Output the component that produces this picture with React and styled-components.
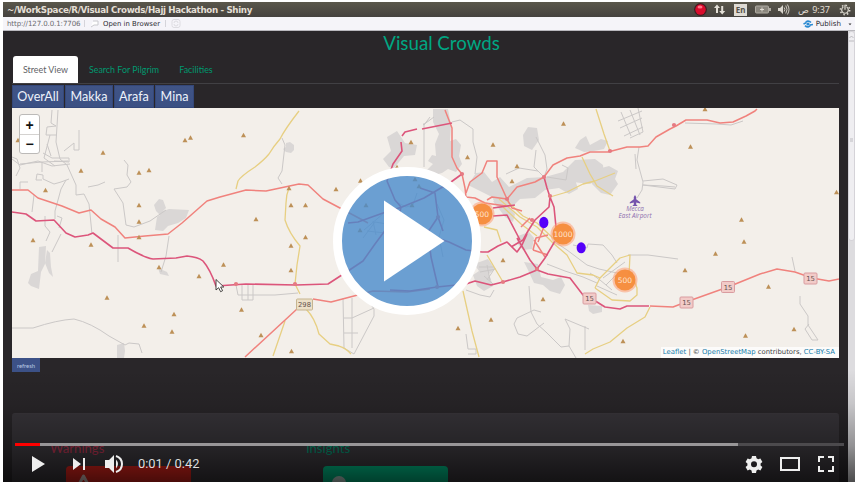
import React from 'react';
import styled, { createGlobalStyle } from 'styled-components';

const GlobalStyle = createGlobalStyle`
  * { box-sizing: border-box; }
  html, body { margin: 0; background: #fff; overflow: hidden; }
  button { border: 0; margin: 0; padding: 0; background: none; font: inherit; color: inherit; }
`;

const Player = styled.main`
  position: relative;
  width: 852px;
  height: 480px;
  margin: 2px 0 0 3px;
  display: flex;
  flex-direction: column;
  background: #292629;
  overflow: hidden;
`;

const TitleBar = styled.header`
  height: 15px;
  flex: none;
  display: flex;
  align-items: center;
  justify-content: space-between;
  padding: 0 4px;
  background: linear-gradient(#5a574b, #45423f);
  color: #e4dfd5;
  font: bold 8.72px 'DejaVu Sans', sans-serif;
  white-space: nowrap;
`;

const Title = styled.span`
  letter-spacing: -.35px;
`;

const Tray = styled.div`
  display: flex;
  align-items: center;
  height: 15px;
  svg { display: block; }
`;

const Clock = styled.span`
  font: 9px 'Noto Sans', 'DejaVu Sans', sans-serif;
  width: 32px;
  margin: 0 9px 0 4px;
  direction: ltr;
  display: flex;
  justify-content: space-between;
`;

const Lang = styled.span`
  width: 13px;
  height: 12px;
  margin: 0 8px 0 6px;
  background: #dfdbd4;
  color: #55514a;
  font: bold 8px/12px 'Noto Sans', sans-serif;
  text-align: center;
`;

const Toolbar = styled.div`
  height: 14px;
  flex: none;
  display: flex;
  align-items: center;
  padding: 0 0 0 4px;
  background: #f5f4f9;
  border-bottom: 1px solid #b9b8bd;
  color: #2d2d33;
  font: 6.9px 'DejaVu Sans', sans-serif;
  white-space: nowrap;
`;

const Address = styled.span`
  width: 74px;
  color: #6b6b70;
  font-size: 7.05px;
  letter-spacing: -.1px;
`;

const ToolDivider = styled.i`
  width: 1px;
  height: 7px;
  margin-left: ${p => p.$gap || 0}px;
  background: #d5d4da;
`;

const ToolLabel = styled.span`
  margin-left: ${p => p.$gap}px;
`;

const Publish = styled.div`
  margin-left: auto;
  display: flex;
  align-items: center;
  gap: 3px;
  font-size: 7.1px;
`;

const Viewport = styled.div`
  flex: 1;
  display: flex;
  min-height: 0;
`;

const Page = styled.section`
  flex: 1;
  padding: 0 9px;
  font-family: Lato, sans-serif;
`;

const Heading = styled.h1`
  height: 25px;
  margin: 0;
  padding-left: 32px;
  color: #00a783;
  font: 400 18.7px/25px Lato, sans-serif;
  text-align: center;
`;

const Tabs = styled.nav`
  display: flex;
  height: 28px;
  width: 827px;
  border-bottom: 1px solid #414044;
`;

const Tab = styled.button`
  width: ${p => p.$w}px;
  height: 27px;
  padding-bottom: 1px;
  margin-left: ${p => p.$gap || 0}px;
  border-radius: 3px 3px 0 0;
  background: ${p => (p.$active ? '#fff' : 'transparent')};
  color: ${p => (p.$active ? '#606266' : '#00996f')};
  font-size: 8.9px;
  white-space: nowrap;
`;

const Regions = styled.div`
  display: flex;
  gap: 1px;
  height: 24px;
`;

const RegionButton = styled.button`
  width: ${p => p.$w}px;
  height: 23px;
  margin-top: 1px;
  background: linear-gradient(#405486, #3b5084);
  border: 1px solid #344779;
  color: #edf2fb;
  font: 12.6px/19px Lato, sans-serif;
`;

const MapPanel = styled.div`
  position: relative;
  width: 827px;
  height: 250px;
  background: #f3efea;
  overflow: hidden;
  > svg { display: block; }
`;

const ZoomControl = styled.div`
  position: absolute;
  left: 7px;
  top: 6px;
  width: 21px;
  height: 40px;
  display: flex;
  flex-direction: column;
  border: 1px solid #bcbab8;
  border-radius: 3px;
  background: #fff;
`;

const ZoomButton = styled.button`
  height: 19px;
  color: #111;
  font: bold 14px/18px 'Liberation Sans', sans-serif;
  & + & { border-top: 1px solid #d4d2d0; }
`;

const Attribution = styled.div`
  position: absolute;
  right: 0;
  bottom: 0;
  width: 178px;
  height: 11px;
  background: rgba(255, 255, 255, .75);
  color: #444;
  font: 6.87px/11px 'DejaVu Sans', sans-serif;
  text-align: right;
  padding-right: 4px;
  white-space: nowrap;
  b { font-weight: 400; color: #147cab; }
`;

const Refresh = styled.button`
  display: block;
  width: 28px;
  height: 14px;
  background: #3c5187;
  color: #b9c8e4;
  font-size: 5.9px;
`;

const Well = styled.section`
  width: 827px;
  height: 90px;
  margin-top: 41px;
  border-radius: 3px 3px 0 0;
  border-top: 1px solid #3b383d;
  background: #39363b;
  display: flex;
  padding: 26px 0 0 38px;
`;

const Group = styled.div`
  width: 256px;
`;

const GroupTitle = styled.h2`
  margin: 0;
  height: 26px;
  color: ${p => p.$color};
  font: 400 13.1px/17px Lato, sans-serif;
`;

const Card = styled.div`
  width: 125px;
  height: 30px;
  margin-left: ${p => p.$shift}px;
  border-radius: 4px;
  background: ${p => p.$color};
  padding-left: 9px;
  svg { display: block; }
`;

const Scroller = styled.aside`
  width: 7px;
  background: #dddcdf;
`;

const Thumb = styled.div`
  height: 210px;
  border: 1px solid #d5d3d8;
  border-radius: 3px;
  background: #efeef1;
  svg { display: block; }
`;

const Shade = styled.div`
  position: absolute;
  inset: auto 0 0;
  height: 112px;
  background: linear-gradient(transparent, rgba(0, 0, 0, .1) 30%, rgba(0, 0, 0, .34) 68%, rgba(0, 0, 0, .5) 84%, rgba(0, 0, 0, .66));
`;

const PlayOverlay = styled.button`
  position: absolute;
  left: 330px;
  top: 165px;
  width: 148px;
  height: 148px;
  border-radius: 50%;
  border: 9px solid #fff;
  background: rgba(73, 139, 204, .8);
  svg { display: block; }
`;

const Controls = styled.footer`
  position: absolute;
  inset: auto 11px 0 12px;
  height: 39px;
`;

const Track = styled.div`
  height: 3px;
  display: flex;
  background: #4c4a4d;
`;

const Segment = styled.i`
  width: ${p => p.$w}px;
  background: ${p => p.$color};
`;

const ControlRow = styled.div`
  height: 36px;
  display: flex;
  align-items: center;
  color: #eee;
  svg { display: block; flex: none; }
`;

const Time = styled.span`
  margin-left: 11px;
  padding-bottom: 1px;
  font: 12.9px Roboto, sans-serif;
  color: #ddd;
  flex: 1;
`;

const peaks = [
  [18,140],[103,152.5],[81,170.5],[45.5,190],[139,172.5],[149,170],[185,140],[190.5,137.5],
  [139,205],[139,221.5],[139,237],[33,240],[243.5,135],[289,188],[291,205],[305.5,205],
  [256,219],[305.5,237],[336,189],[360.5,180.5],[411,142],[397,167],[415,179],[419,186],
  [366,205],[412,205],[360,230],[563.5,123.5],[493,144.5],[467.5,157],[517,166],[512,181],
  [705,109],[690.5,146.5],[836.5,192],[741.5,219.5],[91,244.5],[159,267],[199,276],
  [107,297.5],[174,314],[144,325.5],[172,331.5],[291,245.5],[223.5,264.5],[291,270],
  [241.5,309.5],[261,335],[291.5,351],[503,260],[543,299],[491,319.5],[458,328],[623,341],
  [744,241.5],[715.5,253.5],[685,270],[768.5,286.5],[794,329],[745.5,335.5],
];

const districts = [
  'M154 205l5-6 4 1 3 8-3 3 6-2 20 1-3 8-8 5-10 3-5 5-8-1 2-13 3-2-4-4z',
  'M286 143l4-1 4 3v5l-3 3-5-1-3-3 3-2z',
  'M39 247l7-1-1 18-4 8-2 17-8-3-3-3 3-9 7-3z',
  'M47 250l3 3 1 14 2 10-4-4-4-10z',
  'M117 345l7-2 1 8-1 7h-7z M158 268l9 4 2 4-9-2z',
  'M433 109h15l3 16-1 16 6-2 5 6-2 11 3 8-6 8-8-3-6 4-11 3-6-4 8-8-5-3 4-6 4 1-1-12 4-10-6-12z',
  'M387 137l10-6 8 12 12 2-2 10-11 1-10 12-5-1-6-8 8-8z',
  'M528 127l9 1 2 12-7 10-8-4-1-11z',
  'M580 140l6-4 4 9 11-6 7 2-4 8-10 2-10 1-9-4z',
  'M468 185l8-12 8-1 8 10 8-5 9 10 18-9 18-1 18-5 11 4 4 13-9 5-10-6-14 2-10 8-15 1-8 8-16-2-4-8z',
  'M563 172l12-12 20-1 8 6 1 12-14 7-17-2-7 5z',
  'M594 170l15-4 9 5-3 8 3 5-8 11-9-2-9-9z',
  'M474 264l14-5 7 10-6 5 4 12-9 5-7-5-4-11 6-4z',
  'M524 262l14 2 3 13 12 3 8-3 4 8-5 9-10-3-7-6-9-2-6-13z',
  'M588 305l14 1v6l-9 2-4-3z',
  'M518 236l11-4 5 6-2 11-9 1-6-7z',
  'M493 201l10 0 12 13-2 8-8-5z',
];

const tracks = [
  'M52 110l-1 13 5 3-9 1-1 8h11m-7 0l-6 23 11 8m3-56-2 32 4 17 7 6 9 20v10l8-1 5 10 3 30',
  'M43 153l9 5h17v4l-15-1m-3-5-4-12m17 7 10-8v7h5v-20M12 159l8 6 18-4 14 5 18-2',
  'M12 157l5 2 3 9-4 8m4-12 22-2 26-1M42 162v10m-22 17v-7h8m8-2h6m-6 0 1-6 6 1v4l11 5 7-2 8-3',
  'M66 180l-5 9-6 22v8M88 187l10-2 7-3M124 160l4 5-1 10 4 7-4 5-13 2 9 14 3 22 8 2 16-6 16-11',
  'M12 328h21q24-8 41-9 17 4 35 17l16 9 4-2 10 1 3 9M118 235v27M61 234l-9 18M45 216v10l5 6-4 9M169 236l-3 20-5 16M34 195l-2 17M57 216l5 2-3 10',
  'M236 285l2 10h37l23-2m-56-8v15h11v-15m-5 0v15M282 138l3 7-3 26-4 7 4 6',
  'M424 123v44m-1-42 11-8',
  'M343 298l1 50 10 6 20-38v-7l-13-19M352 298v50M344 318h8l22-10M344 333h14M430 117l-6 8',
  'M529 286l2 26 6 12 9 8 15 15 8-1 7 12M541 312l-7-2-17 8-3 6 4 10 9 2 17-13M589 329l-24-10 5 10-1 17m16-20v24M466 334l2 15h8v5h-8M466 290l14 5 10 2 4-7',
  'M621 112l10 24M630 110l10 25M638 108l5 24M618 121l24-10M620 128l22-10M624 136l19-9M630 138l13-6',
  'M639 147l-2 13 6 22-1 8-5 8m6-17 20-2 14 6-2 4-32-4m0 0 20 1 12 1M635 154l1 15M685 123l32 1 14 1 12-4M628 255h20l30 4m114-2 3 14m5 25v8l8 12v9l10 15h-6l-7-11 4-5',
  'M452 122l8-2 13 9v13l4 15-2 17M536 137l9 18 2 14-3 8M536 150l-2 17 10 10M506 174l13-6 19 3M562 165l6 3-2 12-19-3',
  'M555 242l12 8 20 15 12 4 18 4M573 245l14 3 1-4 15 1 9 10 5 8M547 264l18 7 18 6 14 6M590 273l10 7 12 10M597 286l20 9M603 278l22-16M606 285l10-10',
  'M487 265l3 15m5-12-8 12m-7-8 16-3m-12 7 9 8M479 267h15',
  'M364 230l20-17m-21 25 12-16 18 3m-26 6 18 2m-12-12 3 14m22-32 8 4 7-2 4-12m20 11 7 16-5 17 4 20',
];

const minorRoads = [
  'M299 111q-14 18-19 28-7 8-11 15-5 6-14 13-14 9-17 14l-2 8M289 188q-3 7-3 15l-1 17q4 13 15 26l-3 19-2 19 5 10M306 309q9 9 13 25l11 10 9 2q7 2 12 8M285 321l-12 35M463 291l9 40 7 26M596 109l8 25 6 17M582 157l8 17 7 12 16 10M550 197l17-5 16-8 12-3 20-8M585 354l8-5 17-7 17-14 18-11 5-10M487 255l16 27',
  'M499 199l21 18 17 10 16 16 14 12 10 18 16 2 7 3M507 201l16 15 14 7 18 17M503 207l18 17 16 12',
  'M595 288l5-10 20-20 10-3-1 20M595 288l17 12 18 1 7-6v-7l-4-11M484 227l13 3 4 12',
];

const primaryRoads = [
  'M12 190h16l10 8 24 8 17 7 12-3 10 9 14 8 10 11 20-2 23-2 14-11 25-22 13-4 26-7 20 1 33-7 9 1 15 14 32 17 13 7',
  'M245 357l52-48M313 299l18 3 42-11 34 1 23-3M445 110l7 18v29l5 11 5 6 3 14 1 9 9 1 10 5 21 3M466 193l4-11 12-9 5-12h10v16l10 22',
  'M507 199l10-12 18-5 9-5 9-12 14-7 13-2 10-4h18l19-5h13l8-1 8-9 14-8 6-3 10-6 21 0 13 3 13-1 13-6 9-5 2-2',
  'M487 200l5-3 15 2 5 9 10 3M533 250l3-12 12-3M533 250l15 5M534 240l11 17M530 218l-9 9M545 224l-7 18',
  'M650 306l23 1 13-5 42-15 32-13 17-5 18 3 17 6 17 3 10-2 8-4',
];

const trunkRoads = [
  'M12 212l14 2 10 7 18-1 12 13 9 4 13-2 5-2 8 6 12 9h15q17 10 25 11l23-1 11-2q11 1 16 5 7 8 13 25l30-2 50 1 32-1 20-13 15-10 12-17 20-27',
  'M402 136l3-4 12-3m5 0 30-6M401 142l1 9-9 13-6 17 8 19 6 7-5 24M348 223l10-1 25-9 19-6 22-9 27-16 11-8M420 188l15 5 3 24 5 14',
  'M438 217l-10 15 3 25 7 30M390 290l20 1 27-4 29-3 9-3 16 4 12-3 17-5 17-7 11 4 22 4 13 17 14 7 8 5 15 2 7-3h22',
  'M437 238l12 4 17 8 16 2 6 0 10-6 9-4 10 10 5-7 5-11M517 238l6 10 7 12 7 9 8-11 10-17M511 247l12-7 5-9 7-11 14-13 1-10-3-9-3-11M550 197l4 10 2 20M493 208l22-3M493 216l14-1 13 25',
];

const badges = [[304.5,304.5,'298'],[589.5,298.5,'15'],[686.5,302.5,'15'],[728,287,'15'],[810.5,278.5,'15']];
const clusters = [[482,214,'500'],[563,234,'1000'],[625,280,'500']];

const lineSets = [
  { paths: tracks, color: '#cbc8c7', width: 1 },
  { paths: minorRoads, color: '#e7cf82', width: 1.3 },
  { paths: primaryRoads, color: '#f0827d', width: 1.5 },
  { paths: trunkRoads, color: '#dc557b', width: 1.6 },
];

function StreetMap() {
  return (
    <svg width="827" height="250" viewBox="12 108 827 250">
      {districts.map(d => <path key={d} d={d} fill="#dad7d6" />)}
      {lineSets.map(s => (
        <g key={s.color} fill="none" stroke={s.color} strokeWidth={s.width} strokeLinejoin="round">
          {s.paths.map(d => <path key={d} d={d} />)}
        </g>
      ))}
      {peaks.map(([x, y]) => <path key={`${x}-${y}`} d={`M${x} ${y - 2.3}l2.5 4.5h-5z`} fill="#bd9057" />)}
      {[[507,199],[550,196],[544,177],[537,269],[503,282],[462,174],[438,217],[295,284],[236,284],[674,125],[532,220],[610,151],[437,287]].map(([x, y]) => (
        <circle key={`${x}-${y}`} cx={x} cy={y} r="2.1" fill="#e67a82" />
      ))}
      <path d="M635 195l1.2 2v2.2l4 3v1.2l-4-1v2.2l1.5 1.5h-5.4l1.5-1.5v-2.2l-4 1v-1.2l4-3V197z" fill="#7554ad" />
      <g fill="#8b6cae" fontFamily="Open Sans" fontSize="6.3" fontStyle="italic" textAnchor="middle">
        <text x="635" y="210.7">Mecca</text>
        <text x="635" y="218" textLength="33">East Airport</text>
      </g>
      {badges.map(([x, y, t]) => (
        <g key={x}>
          <rect x={x - (t === '298' ? 8 : 6.5)} y={y - 5.5} width={t === '298' ? 16 : 13} height="11" rx="1"
            fill={t === '298' ? '#ece0c8' : '#f2cbc8'} stroke={t === '298' ? '#c6b590' : '#d99ca0'} />
          <text x={x} y={y + 2.5} fontFamily="DejaVu Sans" fontSize="6.8" fill="#65534f" textAnchor="middle">{t}</text>
        </g>
      ))}
      {clusters.map(([x, y, t]) => (
        <g key={x}>
          <circle cx={x} cy={y} r="12.5" fill="#fd9c73" opacity=".55" />
          <circle cx={x} cy={y} r="10.5" fill="#f58a35" opacity=".9" />
          <text x={x} y={y + 2.7} fontFamily="DejaVu Sans" fontSize="7.5" fill="#ffe4cd" textAnchor="middle">{t}</text>
        </g>
      ))}
      <ellipse cx="543.8" cy="222.5" rx="4.6" ry="5.7" fill="#5500fa" />
      <ellipse cx="581.2" cy="247.8" rx="4.6" ry="5.5" fill="#5500fa" />
      <path d="M216 279.5v10.5l2.6-2.3 2 4 2-1-2-3.7h3.2z" fill="#fff" stroke="#33312f" strokeWidth=".9" />
    </svg>
  );
}

function TrayIcons() {
  return (
    <Tray>
      <svg width="13" height="13" viewBox="0 0 13 13">
        <circle cx="6.5" cy="6.5" r="6.4" fill="#3f1d22" /><circle cx="6.5" cy="6.5" r="5.2" fill="#d80b2c" /><ellipse cx="6" cy="4" rx="2.5" ry="1.5" fill="#ff7284" />
      </svg>
      <svg width="21" height="15" viewBox="0 0 21 15" fill="#e3dfd7">
        <path d="M7 6l3-3.5L13 6h-2v5H9V6zM12.2 9l3 3.5 3-3.5h-2V4h-2v5z" />
      </svg>
      <Lang>En</Lang>
      <svg width="16" height="9" viewBox="0 0 16 9">
        <rect x=".5" y="1" width="13" height="7" rx="1" fill="#8b877e" stroke="#b0aca3" /><path d="M14 3h2v3h-2z" fill="#b0aca3" /><path d="M5 4.5h4M7 2.5v4" stroke="#e2ded5" />
      </svg>
      <svg width="23" height="13" viewBox="0 0 23 13" fill="none" stroke="#d9d5cd" strokeWidth=".9">
        <path d="M7 5h2l3-3v9L9 8H7z" fill="#d9d5cd" stroke="none" /><path d="M13.2 4.5q1.3 2 0 4m1.6-6q2.4 4 0 8m1.6-9q3.2 5 0 10" />
      </svg>
      <Clock><span>ص</span><span>9:37</span></Clock>
      <svg width="12" height="12" viewBox="0 0 12 12" fill="none" stroke="#ddd9d1">
        <circle cx="6" cy="6" r="4.7" strokeWidth="1.5" strokeDasharray="1.5 2.19" />
        <path d="M4.3 3.1a3.3 3.3 0 1 0 3.4 0M6 .8v5" strokeWidth="1.2" />
      </svg>
    </Tray>
  );
}

export default function App() {
  return (
    <>
      <GlobalStyle />
      <Player>
        <TitleBar>
          <Title>~/WorkSpace/R/Visual Crowds/Hajj Hackathon - Shiny</Title>
          <TrayIcons />
        </TitleBar>
        <Toolbar>
          <Address>http://127.0.0.1:7706</Address>
          <ToolDivider $gap={3} />
          <svg width="15" height="9" viewBox="0 0 15 9" fill="#fff" stroke="#c8c8cd"><path d="M8 2h5v4H9L6 8" /></svg>
          <ToolLabel $gap={3}>Open in Browser</ToolLabel>
          <ToolDivider $gap={5} />
          <svg width="18" height="10" viewBox="0 0 18 10" fill="none" stroke="#dddce1"><rect x="6" y=".5" width="8" height="8" rx="2" /><path d="M8 4a2 2 0 0 1 4 0m0 1a2 2 0 0 1-4 0" /></svg>
          <Publish>
            <svg width="10" height="8" viewBox="0 0 10 8" fill="none" stroke="#2d8bd2" strokeWidth="1.6"><path d="M8 2.5C6 .4 3 .8 2.7 3L.5 4M2 5.6c2 2 5 1.6 5.3-.6L10 4.5" /><circle cx="5" cy="4" r=".8" /></svg>
            Publish
            <svg width="11" height="8" viewBox="0 0 11 8"><path d="M4.5 3.5h3L6 5.2z" fill="#333" /></svg>
          </Publish>
        </Toolbar>
        <Viewport>
          <Page>
            <Heading>Visual Crowds</Heading>
            <Tabs>
              <Tab $active $w={65} $gap={1}>Street View</Tab>
              <Tab $w={72} $gap={10}>Search For Pilgrim</Tab>
              <Tab $w={34} $gap={19}>Facilities</Tab>
            </Tabs>
            <Regions>
              <RegionButton $w={52}>OverAll</RegionButton>
              <RegionButton $w={48}>Makka</RegionButton>
              <RegionButton $w={40}>Arafa</RegionButton>
              <RegionButton $w={39}>Mina</RegionButton>
            </Regions>
            <MapPanel>
              <StreetMap />
              <ZoomControl><ZoomButton>+</ZoomButton><ZoomButton>−</ZoomButton></ZoomControl>
              <Attribution><b>Leaflet</b> | © <b>OpenStreetMap</b> contributors, <b>CC-BY-SA</b></Attribution>
            </MapPanel>
            <Refresh>refresh</Refresh>
            <Well>
              <Group>
                <GroupTitle $color="#ad304c">Warnings</GroupTitle>
                <Card $color="#d8231b" $shift={16}>
                  <svg width="18" height="18" viewBox="0 0 18 18"><path d="M8.5 10L2 22h13z" fill="none" stroke="#d1bcb9" strokeWidth="3" strokeLinejoin="round" /></svg>
                </Card>
              </Group>
              <Group>
                <GroupTitle $color="#008b6b">Insights</GroupTitle>
                <Card $color="#00b883" $shift={17}>
                  <svg width="16" height="18" viewBox="0 0 16 18"><circle cx="7" cy="17" r="7" fill="#b5ccc6" /></svg>
                </Card>
              </Group>
            </Well>
          </Page>
          <Scroller>
            <Thumb><svg width="5" height="110" viewBox="0 0 5 110" fill="none" stroke="#aaa8ae" strokeWidth=".7"><path d="M.5 6l2-2 2 2M0 9h5M1 107h3m-3 2h3" /></svg></Thumb>
          </Scroller>
        </Viewport>
        <Shade />
        <PlayOverlay aria-label="Play video">
          <svg width="130" height="130" viewBox="0 0 130 130"><path d="M42 24.5v81L102.5 65z" fill="#fff" /></svg>
        </PlayOverlay>
        <Controls>
          <Track><Segment $w={25} $color="#f00" /><Segment $w={698} $color="#989698" /></Track>
          <ControlRow>
            <svg width="112" height="36" viewBox="15 446 112 36" fill="#eee">
              <path d="M32 456v16l13-8zM73 458v12l8-6zM83 458h2v12h-2zM105 460h4l5-5v18l-5-5h-4z" />
              <path d="M116 459.5q4 4.5 0 9z" />
              <path d="M116 456q6 2 6 8t-6 8" fill="none" stroke="#eee" strokeWidth="2" />
            </svg>
            <Time>0:01 / 0:42</Time>
            <svg width="104" height="36" viewBox="740 446 104 36" fill="none" stroke="#eee" strokeWidth="2">
              <path fill="#eee" stroke="none" fillRule="evenodd" d="M752 456h4l.5 2.3 1.7 1 2.2-.8 2 3.5-1.8 1.5v1.9l1.8 1.6-2 3.4-2.2-.8-1.7 1-.5 2.4h-4l-.5-2.4-1.7-1-2.2.8-2-3.4 1.8-1.6v-1.9l-1.8-1.5 2-3.5 2.2.8 1.7-1zM754 461.3a3 3 0 1 0 0 6 3 3 0 0 0 0-6z" />
              <rect x="781" y="458" width="18" height="12" />
              <path d="M819 462v-5h5m4 0h5v5m0 4v5h-5m-4 0h-5v-5" />
            </svg>
          </ControlRow>
        </Controls>
      </Player>
    </>
  );
}
